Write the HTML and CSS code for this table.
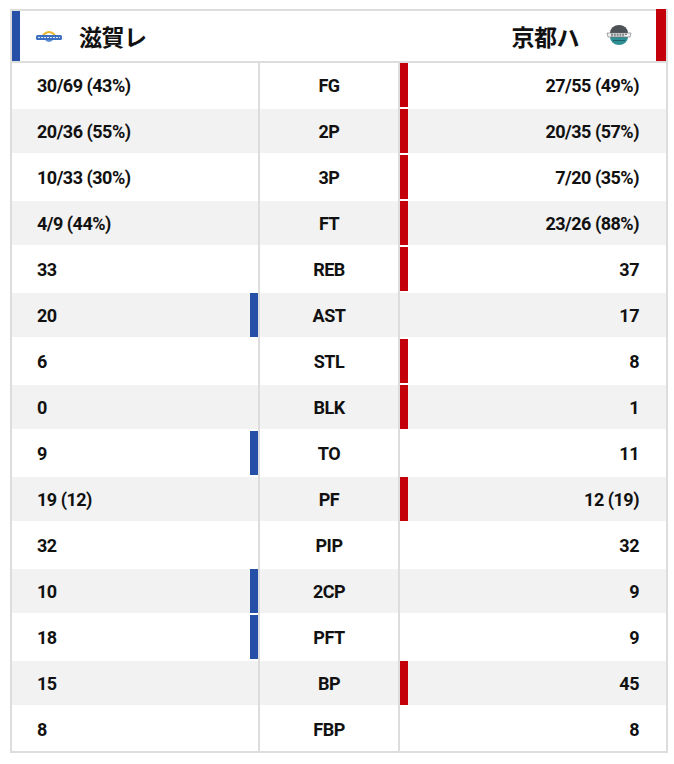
FILE: index.html
```html
<!DOCTYPE html>
<html lang="ja">
<head>
<meta charset="utf-8">
<title>Team stats</title>
<link rel="stylesheet" href="styles.css">
</head>
<body>
<div class="board">
  <div class="head">
    <div class="team home">
      <span class="tbar blue"></span>
      <svg class="logo logo-home" width="30" height="16" viewBox="0 0 30 16">
        <path d="M9 6 Q15 0 21 6" fill="none" stroke="#e8b930" stroke-width="2"/>
        <rect x="2" y="6" width="26" height="5" rx="1.5" fill="#3d6fc0"/>
        <path d="M4 8.5 H26" stroke="#dfe9f7" stroke-width="1" stroke-dasharray="2 1"/>
        <path d="M11 11 Q15 15 19 11 Z" fill="#5d8fd3"/>
      </svg>
      <span class="tname">滋賀レ</span>
    </div>
    <div class="team away">
      <span class="tname">京都ハ</span>
      <svg class="logo logo-away" width="28" height="20" viewBox="0 0 28 20">
        <path d="M5 8 A9 8 0 0 1 23 8 Z" fill="#4d5257"/>
        <path d="M5 12 A9 8 0 0 0 23 12 Z" fill="#2f8f94"/>
        <path d="M2 8 H26 L25 12 H3 Z" fill="#f2f2f2" stroke="#6b6f73" stroke-width="0.6"/>
        <path d="M6 9.3 H22 M6 10.8 H20" stroke="#555a5e" stroke-width="0.9" stroke-dasharray="2 0.8"/>
        <path d="M8 15.5 H20" stroke="#1d5f63" stroke-width="1"/>
      </svg>
      <span class="tbar red"></span>
    </div>
  </div>
  <div class="rows">
    <div class="row"><div class="cell l">30/69 (43%)</div><div class="cell m">FG</div><div class="cell r lead">27/55 (49%)</div></div>
    <div class="row alt"><div class="cell l">20/36 (55%)</div><div class="cell m">2P</div><div class="cell r lead">20/35 (57%)</div></div>
    <div class="row"><div class="cell l">10/33 (30%)</div><div class="cell m">3P</div><div class="cell r lead">7/20 (35%)</div></div>
    <div class="row alt"><div class="cell l">4/9 (44%)</div><div class="cell m">FT</div><div class="cell r lead">23/26 (88%)</div></div>
    <div class="row"><div class="cell l">33</div><div class="cell m">REB</div><div class="cell r lead">37</div></div>
    <div class="row alt"><div class="cell l lead">20</div><div class="cell m">AST</div><div class="cell r">17</div></div>
    <div class="row"><div class="cell l">6</div><div class="cell m">STL</div><div class="cell r lead">8</div></div>
    <div class="row alt"><div class="cell l">0</div><div class="cell m">BLK</div><div class="cell r lead">1</div></div>
    <div class="row"><div class="cell l lead">9</div><div class="cell m">TO</div><div class="cell r">11</div></div>
    <div class="row alt"><div class="cell l">19 (12)</div><div class="cell m">PF</div><div class="cell r lead">12 (19)</div></div>
    <div class="row"><div class="cell l">32</div><div class="cell m">PIP</div><div class="cell r">32</div></div>
    <div class="row alt"><div class="cell l lead">10</div><div class="cell m">2CP</div><div class="cell r">9</div></div>
    <div class="row"><div class="cell l lead">18</div><div class="cell m">PFT</div><div class="cell r">9</div></div>
    <div class="row alt"><div class="cell l">15</div><div class="cell m">BP</div><div class="cell r lead">45</div></div>
    <div class="row last"><div class="cell l">8</div><div class="cell m">FBP</div><div class="cell r">8</div></div>
  </div>
</div>
</body>
</html>
```
FILE: styles.css
```css
html, body {
  margin: 0;
  padding: 0;
  background: #fff;
}

body {
  font-family: Roboto, "Noto Sans CJK JP", sans-serif;
  color: #111;
}

.board {
  margin: 9px 0 0 10px;
  width: 654px;
  border: 2px solid #dddddd;
}

.head {
  display: flex;
  justify-content: space-between;
  height: 50px;
  border-bottom: 2px solid #dddddd;
}

.team {
  display: flex;
  align-items: center;
}

.tbar {
  align-self: stretch;
  flex: none;
}

.tbar.blue {
  width: 8px;
  background: #2650a8;
}

.tbar.red {
  width: 10px;
  background: #c4000b;
  margin-top: -2px;
}

.logo {
  flex: none;
  display: block;
}

.logo-home {
  margin-left: 14px;
  margin-top: 2px;
}

.logo-away {
  margin-left: 26px;
  margin-right: 23px;
  margin-top: -2px;
}

.tname {
  font-family: "Noto Sans CJK JP", sans-serif;
  font-weight: 700;
  font-size: 23px;
  line-height: 1;
  letter-spacing: -0.5px;
}

.home .tname {
  margin-left: 15px;
}

.row {
  display: grid;
  grid-template-columns: 246px 138px 266px;
  column-gap: 2px;
  background: #dddddd;
}

.cell {
  height: 42px;
  padding-top: 2px;
  border-bottom: 2px solid #ffffff;
  background: #ffffff;
  display: flex;
  align-items: center;
  font-weight: 700;
  font-size: 18px;
  letter-spacing: -0.5px;
  line-height: 1;
}

.row.alt .cell {
  background: #f2f2f2;
}

.row.last .cell {
  border-bottom: 0;
}

.cell.l {
  padding-left: 25px;
}

.cell.m {
  justify-content: center;
}

.cell.r {
  justify-content: flex-end;
  padding-right: 27px;
}

.cell.l.lead {
  box-shadow: inset -8px 0 0 #2650a8;
}

.cell.r.lead {
  box-shadow: inset 8px 0 0 #c4000b;
}
```
